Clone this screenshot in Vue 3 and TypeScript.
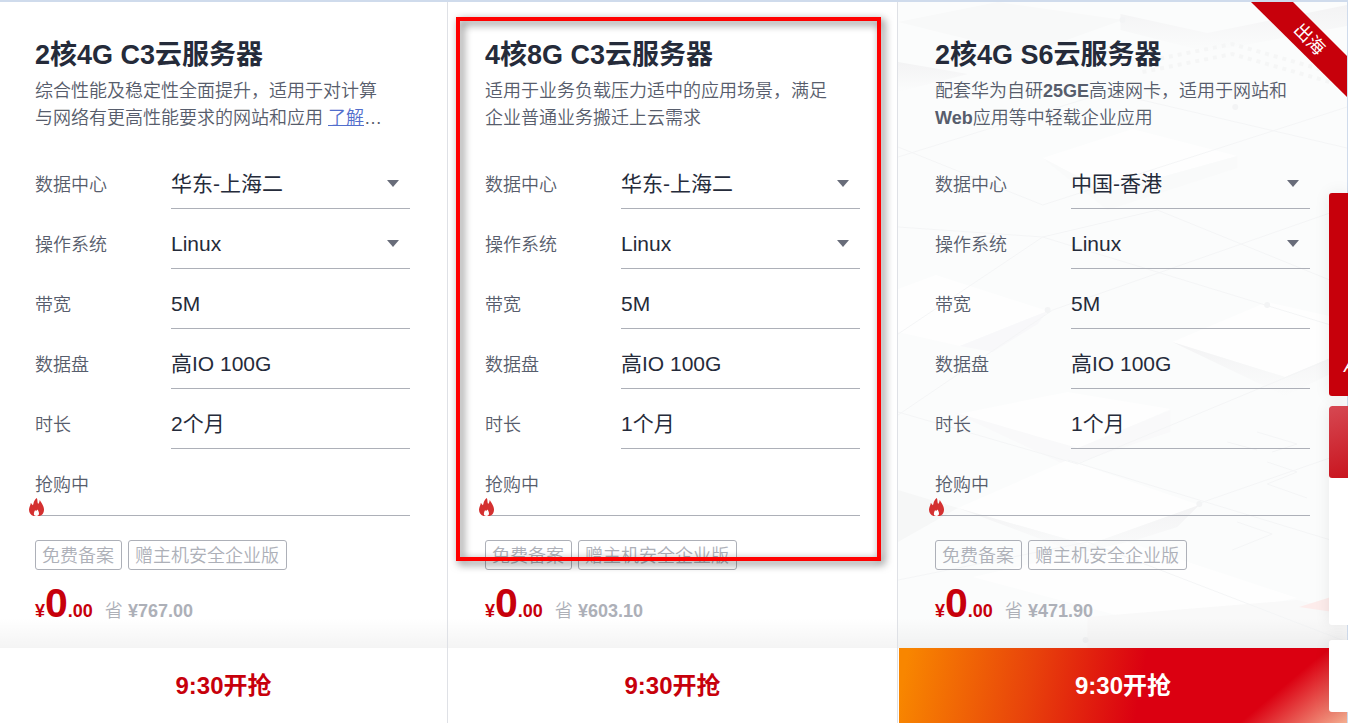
<script setup lang="ts">
interface Segment {
  text: string
  kind?: 'latin' | 'link'
}
interface Field {
  label: string
  value: string
  options?: string[]
}
interface Plan {
  id: string
  title: string
  desc: Segment[]
  fields: Field[]
  saved: string
  overseas?: boolean
}

const tags = ['免费备案', '赠主机安全企业版']

function fieldsFor(region: string, months: number): Field[] {
  return [
    { label: '数据中心', value: region, options: [region] },
    { label: '操作系统', value: 'Linux', options: ['Linux'] },
    { label: '带宽', value: '5M' },
    { label: '数据盘', value: '高IO 100G' },
    { label: '时长', value: `${months}个月` },
  ]
}

const plans: Plan[] = [
  {
    id: 'c3-2-4',
    title: '2核4G C3云服务器',
    desc: [
      { text: '综合性能及稳定性全面提升，适用于对计算与网络有更高性能要求的网站和应用 ' },
      { text: '了解', kind: 'link' },
      { text: '…' },
    ],
    fields: fieldsFor('华东-上海二', 2),
    saved: '¥767.00',
  },
  {
    id: 'c3-4-8',
    title: '4核8G C3云服务器',
    desc: [{ text: '适用于业务负载压力适中的应用场景，满足企业普通业务搬迁上云需求' }],
    fields: fieldsFor('华东-上海二', 1),
    saved: '¥603.10',
  },
  {
    id: 's6-2-4',
    title: '2核4G S6云服务器',
    desc: [
      { text: '配套华为自研' },
      { text: '25GE', kind: 'latin' },
      { text: '高速网卡，适用于网站和' },
      { text: 'Web', kind: 'latin' },
      { text: '应用等中轻载企业应用' },
    ],
    fields: fieldsFor('中国-香港', 1),
    saved: '¥471.90',
    overseas: true,
  },
]
</script>

<template>
  <main class="page">
    <section class="plans">
      <article v-for="plan in plans" :key="plan.id" class="card" :class="{ featured: plan.overseas }">
        <svg v-if="plan.overseas" class="scene" viewBox="0 0 450 646" preserveAspectRatio="none" aria-hidden="true">
          <defs>
            <linearGradient id="edge" x1="0" y1="0" x2="0" y2="1">
              <stop offset="0" stop-color="#f3f3f4" />
              <stop offset="1" stop-color="#fbfcfc" />
            </linearGradient>
          </defs>
          <rect width="450" height="646" fill="#fbfcfc" />
          <path d="M0 20 100 0 225 18 130 52Z" fill="#f8f9f9" />
          <path d="M223 12 310 31 450 3V24L310 50 223 28Z" fill="url(#edge)" />
          <path d="M0 60 70 72 0 90Z" fill="url(#edge)" />
          <path d="M145 156 235 127 340 154 210 190Z" fill="#fefefe" />
          <path d="M145 156 210 190 340 154V166L210 208Z" fill="#f9fafa" />
          <path d="M0 287 38 273 150 309 62 344 0 330Z" fill="#fefefe" />
          <path d="M62 344 150 309 140 322 95 350Z" fill="#f8f8fa" />
          <path d="M275 340 370 300 450 318V349L388 375Z" fill="#fefefe" />
          <path d="M275 340 388 375 450 349V364L388 394Z" fill="url(#edge)" />
          <path d="M60 412 170 390 273 407 180 448Z" fill="#fefefe" />
          <path d="M55 410 180 446 273 408V430L170 464Z" fill="#f9f9fa" />
          <path d="M0 488 60 506 0 540Z" fill="#f6f7f7" />
          <path d="M60 506 170 458 302 503 190 543Z" fill="#fefefe" />
          <path d="M60 506 190 543 302 503 280 525 188 554Z" fill="url(#edge)" />
          <path d="M75 575 230 540 400 596 260 624Z" fill="#fefefe" />
          <path d="M190 615 400 598 450 610V646H190Z" fill="#f9f9f9" />
          <path d="M402 605 450 590V612Z" fill="#fdeceb" />
          <g fill="none" stroke="#f4f5f6">
            <path d="M0 145 145 203 450 105M0 155 210 90 450 146M0 225 145 235 450 328M0 332 145 235 260 208 450 285M0 413 155 308 450 205M0 410 180 462 450 350M300 502 450 450M170 458 450 543M0 578 190 540 450 640" />
            <path d="M370 460l30 10-30 12 40 14M340 520l35 12-40 16M330 440l30 8M360 430l40 12-25 8" />
          </g>
          <g fill="none" stroke="#f5f6f6" stroke-width="4" stroke-dasharray="4 5">
            <path d="M245 60 335 42 440 72M245 70 335 52 440 82" />
          </g>
          <g fill="#f3f4f5">
            <circle cx="225" cy="18" r="3" /><circle cx="338" cy="105" r="3" />
            <circle cx="150" cy="308" r="3" /><circle cx="370" cy="303" r="3" />
            <circle cx="302" cy="502" r="3" /><circle cx="188" cy="638" r="3" />
          </g>
        </svg>

        <div class="body">
          <h2 class="title">{{ plan.title }}</h2>
          <p class="desc"><template v-for="(part, i) in plan.desc" :key="i"><a v-if="part.kind === 'link'" href="#">{{ part.text }}</a><b v-else-if="part.kind === 'latin'">{{ part.text }}</b><template v-else>{{ part.text }}</template></template></p>

          <div class="fields">
            <div v-for="(field, i) in plan.fields" :key="field.label" class="field">
              <label :for="`${plan.id}-${i}`">{{ field.label }}</label>
              <div v-if="field.options" class="control">
                <select :id="`${plan.id}-${i}`" :value="field.value">
                  <option v-for="option in field.options" :key="option">{{ option }}</option>
                </select>
                <svg class="caret" viewBox="0 0 12 7" aria-hidden="true"><path d="M0 0h12L6 7z" fill="#686c79" /></svg>
              </div>
              <output v-else :id="`${plan.id}-${i}`" class="control">{{ field.value }}</output>
            </div>
          </div>

          <div class="stock">
            抢购中
            <svg class="flame" viewBox="0 0 15 18" aria-hidden="true">
              <path d="M7.8 0C8.8 1.8 8.2 4 9 5.8 10 5.8 10.4 3.6 10.8 2 12 4.5 15 7.5 15 11.5 15 15 13 17.5 10.4 18H4.6C2 17.5 0 15 0 11.8 0 9 1.6 7.5 1.8 5 2.8 5.8 3.2 6.8 3.9 7.2 5 5.5 4 3 7.8 0Z" fill="#d43030" />
              <path d="M7.5 18C4.2 18 4.4 15 6.2 12 6.5 13.2 7.8 13.2 8.4 11.6 10.6 14.5 10.8 18 7.5 18Z" fill="#fff" />
            </svg>
          </div>

          <ul class="tags">
            <li v-for="tag in tags" :key="tag">{{ tag }}</li>
          </ul>

          <div class="price">
            <span class="now">¥<strong>0</strong>.00</span>
            <span class="saved">省 <b>{{ plan.saved }}</b></span>
          </div>
        </div>

        <button type="button" class="buy">9:30开抢</button>
        <div v-if="plan.overseas" class="ribbon"><span>出海</span></div>
      </article>
      <div class="marker" aria-hidden="true"></div>
    </section>

    <aside class="dock">
      <div class="promo"><i>A</i></div>
      <div class="menu"><div class="menu-head"></div></div>
      <div class="top"></div>
    </aside>
  </main>
</template>

<style>
html,
body {
  overflow: hidden;
  background: #fff;
}
</style>

<style scoped>
.page {
  position: relative;
  min-height: 100vh;
  overflow: hidden;
  box-sizing: border-box;
  border-top: 2px solid #cfdbec;
  font-family: "Liberation Sans", "Noto Sans CJK SC", sans-serif;
  font-size: 18px;
  font-weight: 350;
  line-height: 27px;
  color: #575d6c;
}
.plans {
  position: relative;
  display: grid;
  grid-template-columns: 448fr 450fr 450fr;
}
.card {
  position: relative;
  display: flex;
  flex-direction: column;
  border-right: 1px solid #dfe1e6;
  overflow: hidden;
  min-width: 0;
}
.card.featured {
  border-right-color: #cfdbec;
}
.scene {
  position: absolute;
  left: 0;
  top: 0;
  width: 100%;
  height: 646px;
}
.body {
  position: relative;
  padding: 35px 37px 0;
  background: linear-gradient(to top, rgba(0, 0, 0, 0.045), transparent 30px);
}
.card:first-child .body {
  padding-left: 35px;
}
.title {
  margin: 0;
  font-size: 27px;
  line-height: 36px;
  font-weight: 700;
  color: #252b3a;
  white-space: nowrap;
}
.desc {
  margin: 5px 0 0;
  padding-right: 20px;
  height: 54px;
}
b {
  font-weight: 700;
}
.desc a {
  color: #526ecc;
  text-decoration: underline;
}
.fields {
  margin-top: 17px;
}
.field {
  display: flex;
  align-items: flex-end;
  height: 60px;
}
.field label {
  flex: 0 0 136px;
  line-height: 48px;
}
.control {
  position: relative;
  flex: 1;
  min-width: 0;
  height: 50px;
  box-sizing: border-box;
  border-bottom: 1px solid #adb0b8;
  font-size: 21px;
  font-weight: 400;
  line-height: 49px;
  color: #252b3a;
}
.field select {
  appearance: none;
  display: block;
  width: 100%;
  height: 49px;
  margin: 0;
  padding: 0;
  border: 0;
  background: transparent;
  font: inherit;
  color: inherit;
}
.caret {
  position: absolute;
  right: 11px;
  top: 21px;
  width: 12px;
  height: 7px;
  pointer-events: none;
}
.stock {
  position: relative;
  height: 67px;
  padding-top: 23px;
  box-sizing: border-box;
  border-bottom: 1px solid #adb0b8;
}
.flame {
  position: absolute;
  left: -6px;
  bottom: -1px;
  width: 15px;
  height: 18px;
}
.tags {
  display: flex;
  gap: 6px;
  margin: 24px 0 0;
  padding: 0;
  list-style: none;
}
.tags li {
  height: 30px;
  padding: 0 7px 0 6px;
  box-sizing: border-box;
  border: 1px solid #adb0b8;
  border-radius: 3px;
  line-height: 30px;
  color: #adb0b8;
  white-space: nowrap;
}
.price {
  display: flex;
  align-items: baseline;
  gap: 12px;
  height: 78px;
  padding-top: 9px;
  box-sizing: border-box;
  line-height: 48px;
}
.now {
  font-weight: 700;
  color: #c7000b;
}
.now strong {
  font-size: 41px;
}
.saved {
  color: #adb0b8;
}
.buy {
  position: relative;
  height: 75px;
  padding: 1px 0 0;
  border: 0;
  background: #fff;
  font: 700 24px/74px "Liberation Sans", "Noto Sans CJK SC", sans-serif;
  color: #c7000b;
  cursor: pointer;
}
.featured .buy {
  margin-left: 1px;
  color: #fff;
  background:
    linear-gradient(140deg, rgba(245, 175, 145, 0) 80%, #f5af91 100%),
    linear-gradient(100deg, #f88600 2%, #e8420b 30%, #db0011 54%);
}
.ribbon {
  position: absolute;
  top: 0;
  right: -1px;
  width: 97px;
  height: 96px;
  background: #c7000b;
  clip-path: polygon(0 0, 42px 0, 100% 55px, 100% 96px);
  color: #fff;
  font-weight: 400;
}
.ribbon span {
  position: absolute;
  left: 40px;
  top: 24px;
  width: 36px;
  text-align: center;
  transform: rotate(45deg);
}
.marker {
  position: absolute;
  left: 456px;
  top: 15px;
  width: 425px;
  height: 544px;
  box-sizing: border-box;
  border: 4px solid #f00;
  filter: drop-shadow(3px 3px 4px rgba(0, 0, 0, 0.6));
  pointer-events: none;
}
.dock {
  position: absolute;
  right: 0;
  top: 191px;
  width: 19px;
}
.dock > div {
  overflow: hidden;
  border-radius: 3px 0 0 3px;
  background: #fff;
  box-shadow: 0 0 16px rgba(0, 0, 0, 0.08);
}
.dock .promo {
  height: 203px;
  padding: 160px 0 0 15px;
  box-sizing: border-box;
  background: #c7000b;
  color: #fff;
  font-weight: 400;
}
.menu {
  height: 219px;
  margin-top: 10px;
}
.menu-head {
  height: 72px;
  border-radius: 3px 0 0 3px;
  background: linear-gradient(165deg, #d64852, #c9151f);
}
.top {
  height: 72px;
  margin-top: 15px;
}
</style>
